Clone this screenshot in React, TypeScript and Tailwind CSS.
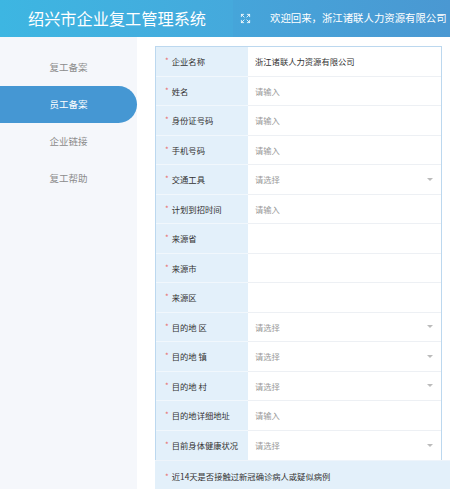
import { Expand } from 'lucide-react'

type Field = {
  label: string
  kind: 'text' | 'input' | 'select' | 'empty'
  value?: string
}

const fields: Field[] = [
  { label: '企业名称', kind: 'text', value: '浙江诸联人力资源有限公司' },
  { label: '姓名', kind: 'input' },
  { label: '身份证号码', kind: 'input' },
  { label: '手机号码', kind: 'input' },
  { label: '交通工具', kind: 'select' },
  { label: '计划到招时间', kind: 'input' },
  { label: '来源省', kind: 'empty' },
  { label: '来源市', kind: 'empty' },
  { label: '来源区', kind: 'empty' },
  { label: '目的地 区', kind: 'select' },
  { label: '目的地 镇', kind: 'select' },
  { label: '目的地 村', kind: 'select' },
  { label: '目的地详细地址', kind: 'input' },
  { label: '目前身体健康状况', kind: 'select' },
]

const menu = ['复工备案', '员工备案', '企业链接', '复工帮助']

function FormRow({ field, last }: { field: Field; last: boolean }) {
  return (
    <div className="flex h-[29.5px]">
      <div
        className={`w-[92px] shrink-0 flex items-center pl-[9px] bg-[#e3f0fa] ${
          last ? '' : 'border-b border-[#f1f7fc]'
        }`}
      >
        <span className="text-[#e86a6a] mr-[3px] text-[8px]">*</span>
        <span className="text-[#333]">{field.label}</span>
      </div>
      <div
        className={`flex-1 flex items-center pl-[7px] pr-[8px] bg-white ${
          last ? '' : 'border-b border-[#edf0f4]'
        }`}
      >
        {field.kind === 'text' && <span className="text-[#333]">{field.value}</span>}
        {field.kind === 'input' && <span className="text-[#999]">请输入</span>}
        {field.kind === 'select' && (
          <>
            <span className="text-[#999] flex-1">请选择</span>
            <span className="w-0 h-0 border-l-[3.5px] border-r-[3.5px] border-t-[3.5px] border-l-transparent border-r-transparent border-t-[#bbb]" />
          </>
        )}
      </div>
    </div>
  )
}

export default function App() {
  return (
    <div
      className="w-[450px] h-[489px] overflow-hidden bg-white flex flex-col"
      style={{ fontFamily: '"Noto Sans CJK SC", "Noto Sans", sans-serif' }}
    >
      {/* Header */}
      <div className="h-[37px] shrink-0 flex text-white">
        <div className="w-[233px] flex items-center pl-[28px] bg-gradient-to-r from-[#3db6e2] to-[#45a9dc]">
          <span className="text-[16.2px] leading-none tracking-[0px]">绍兴市企业复工管理系统</span>
        </div>
        <div className="flex-1 flex items-center bg-gradient-to-r from-[#45a5da] to-[#4a98d2]">
          <Expand size={11} strokeWidth={2} className="ml-[7px] text-white/90" />
          <span className="ml-[19px] text-[10.4px] leading-none whitespace-nowrap">
            欢迎回来，浙江诸联人力资源有限公司
          </span>
        </div>
      </div>

      <div className="flex flex-1 min-h-0">
        {/* Sidebar */}
        <div className="w-[137px] shrink-0 bg-[#f5f7fb] pt-[12px]">
          {menu.map((m, i) => (
            <div
              key={m}
              className={`h-[37px] flex items-center justify-center text-[9.5px] ${
                i === 1
                  ? 'bg-[#4597d3] text-white rounded-r-[19px]'
                  : 'text-[#8c8c8c]'
              }`}
            >
              {m}
            </div>
          ))}
        </div>

        {/* Main */}
        <div className="flex-1 pl-[18px] pt-[9px] text-[8.3px]">
          <div className="w-[287px] border border-[#bcd8ef] border-b-0">
            {fields.map((f, i) => (
              <FormRow key={f.label} field={f} last={i === fields.length - 1} />
            ))}
          </div>
          <div className="h-[32px] -mr-[10px] bg-[#e3f0fa] flex items-center pl-[10px] border-t border-[#eef4fa]">
            <span className="text-[#e86a6a] mr-[3px] text-[8px]">*</span>
            <span className="text-[#333]">近14天是否接触过新冠确诊病人或疑似病例</span>
          </div>
        </div>
      </div>
    </div>
  )
}
